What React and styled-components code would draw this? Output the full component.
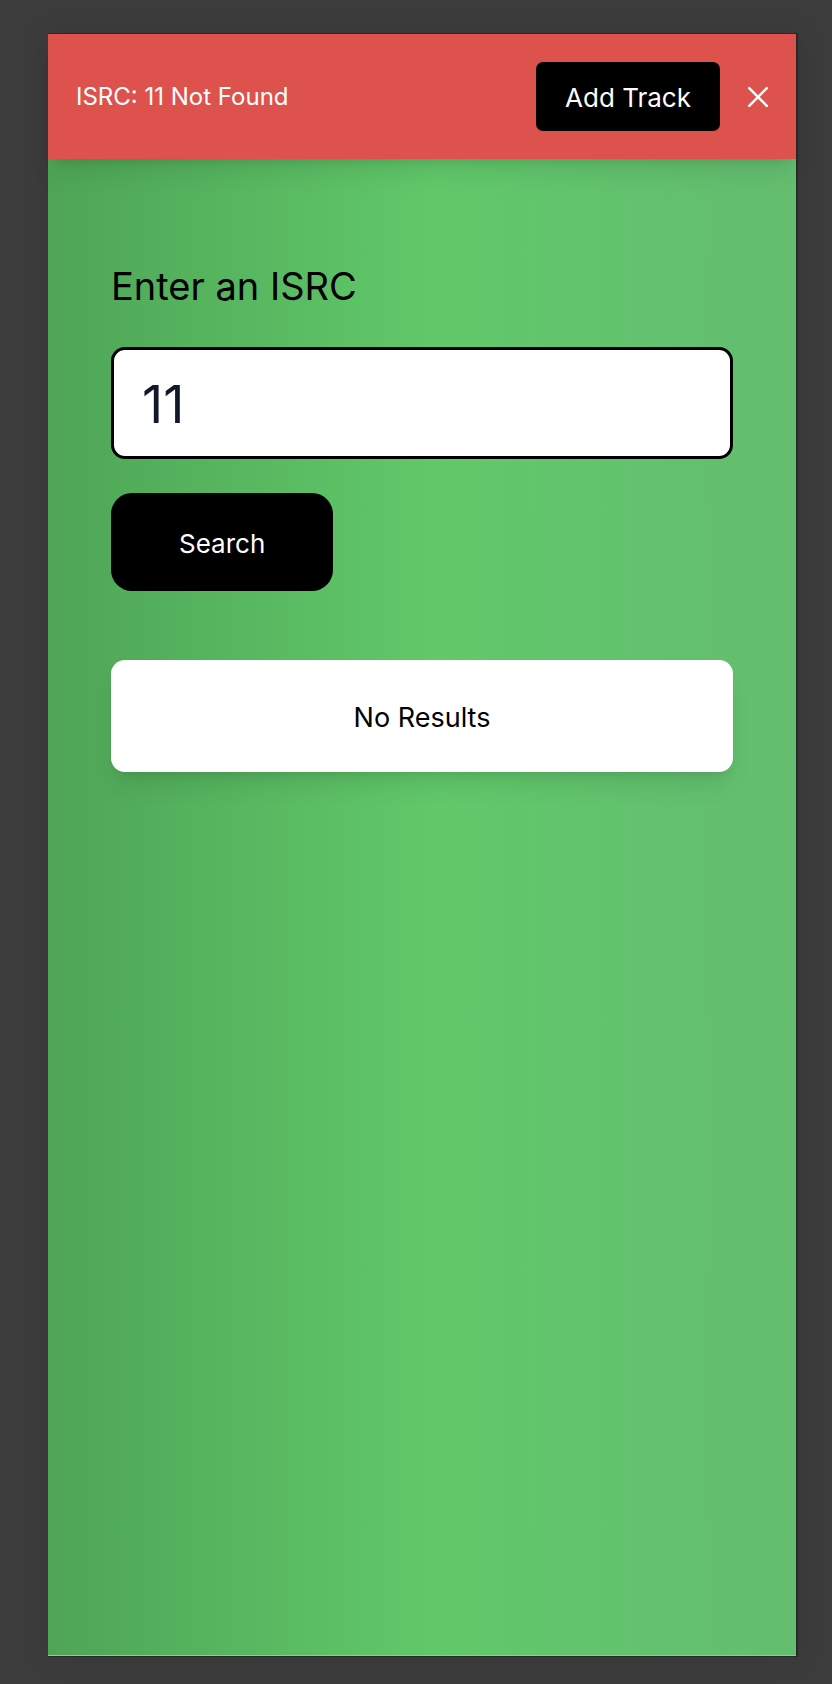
import React, { useState } from "react";
import styled, { createGlobalStyle } from "styled-components";

const GlobalStyle = createGlobalStyle`
  *, *::before, *::after { box-sizing: border-box; }
  body {
    margin: 0;
    background: #3c3c3c;
    font-family: Inter, "Liberation Sans", sans-serif;
  }
  button, input { font-family: inherit; margin: 0; }
`;

const Page = styled.div`
  min-height: 100vh;
  display: flex;
  padding: 33px 34px 27px 48px;
`;

const Screen = styled.div`
  flex: 1;
  min-width: 0;
  display: flex;
  flex-direction: column;
  border: solid #2a2a2a;
  border-width: 1px 2px 1px 0;
  background: #3b3b3b;
  box-shadow: 0 0 28px rgba(0, 0, 0, 0.08);
`;

const Banner = styled.div`
  display: flex;
  align-items: center;
  gap: 28px;
  padding: 28px;
  background: #de524d;
  color: #fff;
  z-index: 1;
  box-shadow: 0 16px 26px -5px rgba(0, 0, 0, 0.1), 0 7px 10px -6px rgba(0, 0, 0, 0.1);
`;

const Message = styled.p`
  flex: 1;
  margin: 0;
  font-size: 24px;
  line-height: 36px;
`;

const Button = styled.button`
  border: 0;
  border-radius: ${(p) => (p.$large ? 21 : 7)}px;
  padding: ${(p) => (p.$large ? "30px 68px 26px" : "15px 29px 13px")};
  background: #000;
  color: #fff;
  font-size: 26px;
  line-height: ${(p) => (p.$large ? 42 : 41)}px;
  white-space: nowrap;
`;

const CloseButton = styled.button`
  display: flex;
  border: 0;
  padding: 0;
  background: none;
  color: inherit;
`;

const Content = styled.main`
  flex: 1;
  display: flex;
  flex-direction: column;
  padding: 103px 63px 64px;
  border-bottom: 1px solid #83d48c;
  background: linear-gradient(90deg, #4ea556 0%, #61c96a 52%, #62c36d 75%, #64bd70 100%);
`;

const SearchForm = styled.form`
  display: flex;
  flex-direction: column;
  align-items: flex-start;
`;

const Label = styled.label`
  margin-bottom: 37px;
  font-size: 38px;
  line-height: 48px;
  color: #000;
`;

const TextInput = styled.input`
  width: 100%;
  height: 112px;
  margin-bottom: 34px;
  padding: 2px 28px 0;
  border: 3px solid #000;
  border-radius: 14px;
  outline: none;
  background: #fff;
  color: #111827;
  font-size: 52px;
  line-height: 60px;
`;

const ResultCard = styled.section`
  margin-top: 69px;
  padding: 37px 35px 33px;
  border-radius: 14px;
  background: #fff;
  color: #000;
  font-size: 27px;
  line-height: 42px;
  text-align: center;
  box-shadow: 0 16px 26px -5px rgba(0, 0, 0, 0.1), 0 7px 10px -6px rgba(0, 0, 0, 0.1);
`;

export default function App() {
  const [isrc, setIsrc] = useState("11");

  return (
    <>
      <GlobalStyle />
      <Page>
        <Screen>
          <Banner role="alert">
            <Message>ISRC: 11 Not Found</Message>
            <Button type="button">Add Track</Button>
            <CloseButton type="button" aria-label="Close">
              <svg width="20" height="20" viewBox="0 0 20 20" fill="none" stroke="currentColor" strokeWidth="2.5" strokeLinecap="round">
                <path d="M1.2 1.2 18.8 18.8M18.8 1.2 1.2 18.8" />
              </svg>
            </CloseButton>
          </Banner>
          <Content>
            <SearchForm onSubmit={(e) => e.preventDefault()}>
              <Label htmlFor="isrc">Enter an ISRC</Label>
              <TextInput id="isrc" type="text" value={isrc} onChange={(e) => setIsrc(e.target.value)} />
              <Button type="submit" $large>Search</Button>
            </SearchForm>
            <ResultCard>No Results</ResultCard>
          </Content>
        </Screen>
      </Page>
    </>
  );
}
